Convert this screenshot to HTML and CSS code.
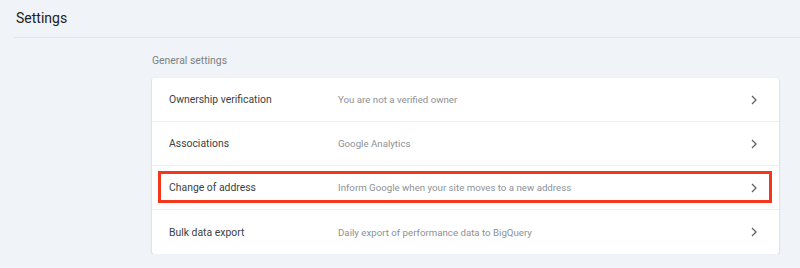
FILE: index.html
```html
<!DOCTYPE html>
<html lang="en">
<head>
  <meta charset="UTF-8">
  <meta name="viewport" content="width=device-width, initial-scale=1.0">
  <title>Settings</title>
  <link rel="stylesheet" href="styles.css">
</head>
<body>
  <header class="page-header">
    <h1>Settings</h1>
  </header>

  <main class="settings">
    <p class="section-title">General settings</p>

    <div class="card">
      <div class="row">
        <span class="row-label">Ownership verification</span>
        <span class="row-desc">You are not a verified owner</span>
        <svg class="chevron" viewBox="0 0 6 10"><path d="M1 1l4 4-4 4"/></svg>
      </div>
      <div class="row">
        <span class="row-label">Associations</span>
        <span class="row-desc">Google Analytics</span>
        <svg class="chevron" viewBox="0 0 6 10"><path d="M1 1l4 4-4 4"/></svg>
      </div>
      <!-- highlighted row -->
      <div class="row highlight">
        <span class="row-label">Change of address</span>
        <span class="row-desc">Inform Google when your site moves to a new address</span>
        <svg class="chevron" viewBox="0 0 6 10"><path d="M1 1l4 4-4 4"/></svg>
      </div>
      <div class="row">
        <span class="row-label">Bulk data export</span>
        <span class="row-desc">Daily export of performance data to BigQuery</span>
        <svg class="chevron" viewBox="0 0 6 10"><path d="M1 1l4 4-4 4"/></svg>
      </div>
    </div>
  </main>
</body>
</html>
```

FILE: styles.css
```css
body {
  font-family: Roboto, "Liberation Sans", Arial, sans-serif;
  background-color: #f0f3f7;
  color: #202124;
  margin: 0;
  padding: 0;
  overflow: hidden;
}

.page-header {
  height: 37px;
  margin-left: 14px;
  border-bottom: 1px solid #e1e5ea;
}

.page-header h1 {
  margin: 0;
  padding: 9px 0 0 2px;
  font-size: 14px;
  font-weight: 400;
  line-height: 18px;
  color: #202124;
}

.settings {
  padding: 0 21px 0 152px;
}

.section-title {
  margin: 16px 0 10px;
  font-size: 10.4px;
  line-height: 14px;
  color: #7b7f84;
}

.card {
  background-color: #fff;
  border-radius: 2px;
  box-shadow: 0 1px 2px rgba(60, 64, 67, 0.3);
}

.row {
  position: relative;
  display: flex;
  align-items: center;
  height: 43px;
  padding: 0 22px 0 17px;
  border-bottom: 1px solid #eceef1;
  font-size: 10.4px;
}

.row:last-child {
  border-bottom: none;
  height: 44px;
}

.row-label {
  width: 169px;
  color: #3c4043;
}

.row-desc {
  flex: 1;
  font-size: 9.7px;
  color: #8d9196;
}

.chevron {
  width: 6px;
  height: 10px;
  fill: none;
  stroke: #5f6368;
  stroke-width: 1.3;
}

/* red box drawn over the row */
.highlight::after {
  content: "";
  position: absolute;
  top: 5px;
  bottom: 6px;
  left: 6px;
  right: 7px;
  border: 3px solid #f4361b;
}
```
